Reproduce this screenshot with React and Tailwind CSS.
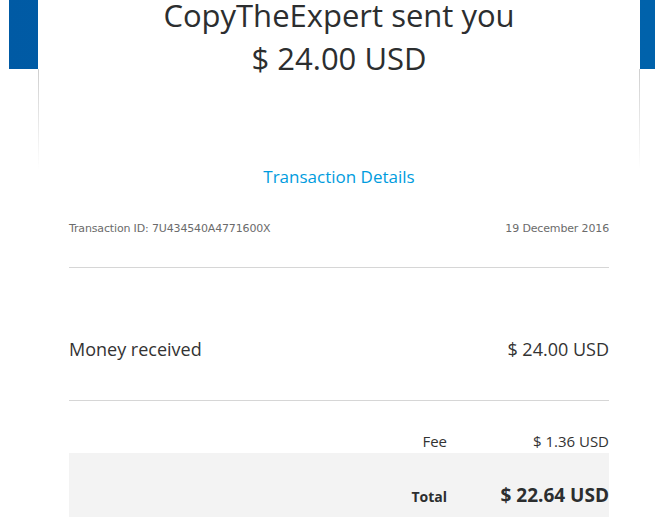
import React from 'react';

const App = () => {
  return (
    <div className="relative h-[517px] w-[655px] overflow-hidden bg-white font-['Open_Sans',sans-serif] text-[#2c2e2f]">
      {/* Blue header band */}
      <div className="ml-[9px] h-[69px] bg-gradient-to-r from-[#005aa4] via-[#0060aa] to-[#0062ab]" />

      {/* Card */}
      <div className="relative ml-[38px] -mt-[69px] flow-root w-[602px] bg-white">
        {/* fading side borders */}
        <div className="absolute left-0 top-[69px] h-[100px] w-px bg-gradient-to-b from-[#cfcfcf] to-white" />
        <div className="absolute right-0 top-[69px] h-[100px] w-px bg-gradient-to-b from-[#cfcfcf] to-white" />

        <div className="text-center text-[31px] text-[#2c2e2f]">
          <div className="leading-[31px]">CopyTheExpert sent you</div>
          <div className="mt-[6px] leading-[43px]">$ 24.00 USD</div>
        </div>

        <div className="mt-[85px] text-center text-[17px] leading-[24px] text-[#009cde]">
          Transaction Details
        </div>

        <div className="px-[31px]">
          <div className="mt-[32px] flex justify-between font-['DejaVu_Sans',sans-serif] text-[11px] leading-[16px] tracking-[-0.15px] text-[#6b6b6b]">
            <span>Transaction ID: 7U434540A4771600X</span>
            <span>19 December 2016</span>
          </div>

          <div className="mt-[30px] h-px bg-[#d6d6d6]" />

          <div className="mt-[69px] flex justify-between text-[18px] leading-[24px] text-[#333]">
            <span>Money received</span>
            <span>$ 24.00 USD</span>
          </div>

          <div className="mt-[39px] h-px bg-[#d6d6d6]" />

          <div className="mt-[30px] grid grid-cols-[1fr_162px] text-[15px] leading-[20px] text-[#333]">
            <span className="text-right">Fee</span>
            <span className="text-right">$ 1.36 USD</span>
          </div>

          <div className="mt-[2px] grid grid-cols-[1fr_162px] items-baseline bg-[#f3f3f3] pb-[40px] pt-[29px]">
            <span className="text-right text-[14px] font-bold leading-[26px] text-[#2c2e2f]">Total</span>
            <span className="text-right text-[19px] font-bold leading-[26px] text-[#2c2e2f]">$ 22.64 USD</span>
          </div>
        </div>
      </div>
    </div>
  );
};

export default App;
